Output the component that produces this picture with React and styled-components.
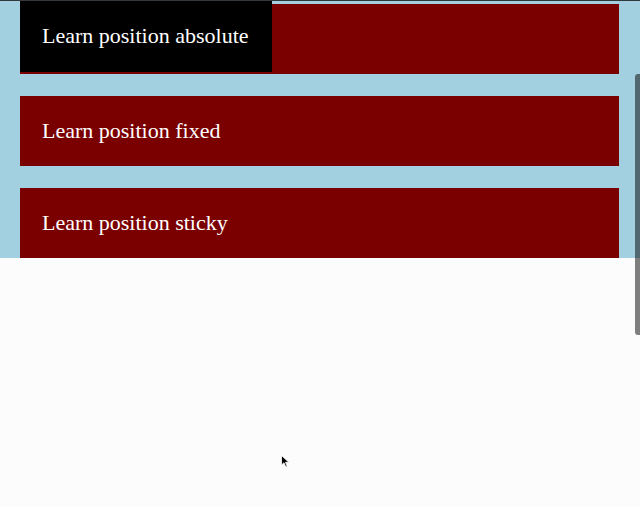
import React from "react";
import styled, { createGlobalStyle } from "styled-components";

const GlobalStyle = createGlobalStyle`
  html, body {
    margin: 0;
    padding: 0;
    background: #fdfcfd;
    font-family: "Liberation Serif", "Times New Roman", serif;
    overflow: hidden;
  }
`;

const Page = styled.div`
  position: relative;
  width: 640px;
  height: 506px;
  background: #fdfcfd;
`;

const TopEdge = styled.div`
  height: 1px;
  background: #33383c;
`;

const Lesson = styled.section`
  position: relative;
  height: 257px;
  overflow: hidden;
  background: #a3d0e0;
  padding: 3px 0 0 20px;
  box-sizing: border-box;
  display: flex;
  flex-direction: column;
  gap: 22px;
`;

const Card = styled.div`
  flex: none;
  width: 599px;
  height: 70px;
  background: #7a0000;
  color: #fff;
  font-size: 22px;
  line-height: 70px;
  padding: 0 22px;
  box-sizing: border-box;
`;

const AbsoluteBox = styled.div`
  position: absolute;
  top: -1px;
  left: 20px;
  height: 72px;
  padding: 0 23px 0 22px;
  background: #000;
  color: #fff;
  font-size: 22px;
  line-height: 72px;
`;

const ScrollThumb = styled.div`
  position: absolute;
  right: 0;
  top: 74px;
  width: 5px;
  height: 261px;
  border-radius: 3px 0 0 3px;
  background: rgba(0, 0, 0, 0.5);
`;

const Cursor = styled.svg`
  position: absolute;
  left: 281px;
  top: 455px;
`;

const lessons = ["", "Learn position fixed", "Learn position sticky"];

export default function App() {
  return (
    <Page>
      <GlobalStyle />
      <TopEdge />
      <Lesson>
        {lessons.map((text, i) => (
          <Card key={i}>{text}</Card>
        ))}
        <AbsoluteBox>Learn position absolute</AbsoluteBox>
      </Lesson>
      <ScrollThumb />
      <Cursor width="9" height="14" viewBox="0 0 9 14">
        <path d="M0.5 0.5 L0.5 10 L3 7.8 L4.8 12 L6.2 11.4 L4.5 7.3 L7.8 7.3 Z" fill="#000" stroke="#fff" strokeWidth="0.8" />
      </Cursor>
    </Page>
  );
}
